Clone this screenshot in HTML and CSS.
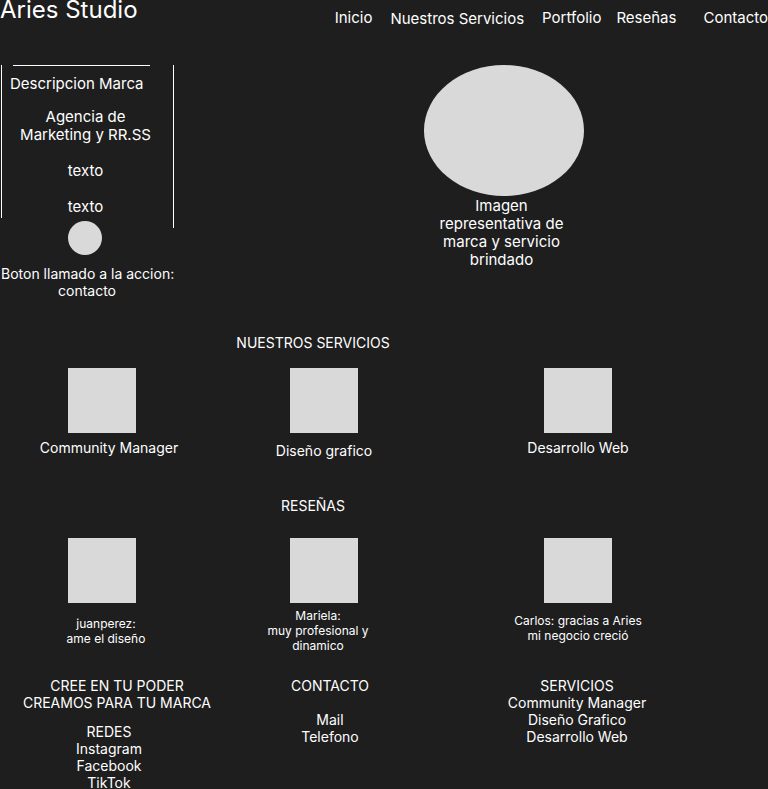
FILE: index.html
```html
<!DOCTYPE html>
<html lang="es">
<head>
<meta charset="utf-8">
<title>Aries Studio</title>
<link rel="stylesheet" href="styles.css">
</head>
<body>
<header class="site-header">
  <div class="logo">Aries Studio</div>
  <nav class="nav">
    <a class="nav-link">Inicio</a>
    <a class="nav-link nav-link--low">Nuestros Servicios</a>
    <a class="nav-link">Portfolio</a>
    <a class="nav-link nav-link--tight">Reseñas</a>
    <a class="nav-link nav-link--wide">Contacto</a>
  </nav>
</header>

<section class="hero">
  <div class="hero-left">
    <div class="brand-box">
      <div class="brand-rule"></div>
      <div class="brand-title">Descripcion Marca</div>
      <div class="brand-text brand-text--first">Agencia de<br>Marketing y RR.SS</div>
      <div class="brand-text">texto</div>
      <div class="brand-text">texto</div>
    </div>
    <div class="cta-dot"></div>
    <div class="cta-label">Boton llamado a la accion:<br>contacto</div>
  </div>
  <div class="hero-rule"></div>
  <figure class="hero-figure">
    <div class="hero-ellipse"></div>
    <figcaption class="hero-caption">Imagen<br>representativa de<br>marca y servicio<br>brindado</figcaption>
  </figure>
</section>

<section class="services">
  <h2 class="section-title">NUESTROS SERVICIOS</h2>
  <div class="cards">
    <div class="card">
      <div class="thumb"></div>
      <div class="card-label card-label--shift">Community Manager</div>
    </div>
    <div class="card">
      <div class="thumb"></div>
      <div class="card-label card-label--low">Diseño grafico</div>
    </div>
    <div class="card">
      <div class="thumb"></div>
      <div class="card-label">Desarrollo Web</div>
    </div>
  </div>
</section>

<section class="reviews">
  <h2 class="section-title section-title--reviews">RESEÑAS</h2>
  <div class="cards cards--reviews">
    <div class="card">
      <div class="thumb"></div>
      <div class="review-area"><p class="review review--right">juanperez:<br>ame el diseño</p></div>
    </div>
    <div class="card">
      <div class="thumb"></div>
      <div class="review-area"><p class="review review--left">Mariela:<br>muy profesional y<br>dinamico</p></div>
    </div>
    <div class="card">
      <div class="thumb"></div>
      <div class="review-area"><p class="review review--up">Carlos: gracias a Aries<br>mi negocio creció</p></div>
    </div>
  </div>
</section>

<footer class="footer">
  <div class="footer-col">
    <p class="footer-slogan">CREE EN TU PODER<br>CREAMOS PARA TU MARCA</p>
    <p class="footer-block">REDES<br>Instagram<br>Facebook<br>TikTok</p>
  </div>
  <div class="footer-col">
    <p class="footer-head">CONTACTO</p>
    <p class="footer-list footer-list--gap">Mail<br>Telefono</p>
  </div>
  <div class="footer-col">
    <p class="footer-head">SERVICIOS</p>
    <p class="footer-list">Community Manager<br>Diseño Grafico<br>Desarrollo Web</p>
  </div>
</footer>
</body>
</html>
```

FILE: styles.css
```css
* { box-sizing: border-box; }

html, body {
  margin: 0;
  padding: 0;
  background: #1e1e1e;
}

body {
  width: 768px;
  color: #ffffff;
  font-family: Inter, "Noto Sans", sans-serif;
  overflow-x: hidden;
}

p, h2, figure { margin: 0; }

/* Header */
.site-header {
  display: flex;
  align-items: flex-start;
  height: 65px;
}

.logo {
  font-size: 24px;
  line-height: 29px;
  margin-top: -5px;
  white-space: nowrap;
}

.nav {
  display: flex;
  align-items: flex-start;
  margin-left: auto;
  padding-top: 9px;
  font-size: 15px;
  line-height: 18px;
  white-space: nowrap;
}

.nav-link { color: #ffffff; margin-left: 18px; }
.nav-link:first-child { margin-left: 0; }
.nav-link--low { margin-top: 1px; margin-left: 18px; }
.nav-link--tight { margin-left: 15px; }
.nav-link--wide { margin-left: 27px; }

/* Hero */
.hero {
  display: flex;
  align-items: flex-start;
}

.hero-left {
  width: 173px;
  display: flex;
  flex-direction: column;
}

.brand-box {
  margin-left: 1px;
  height: 153px;
  border-left: 1px solid #ffffff;
  padding-right: 4px;
  font-size: 15px;
  line-height: 18px;
  text-align: center;
}

.brand-rule {
  width: 137px;
  height: 1px;
  margin-left: 11px;
  background: #ffffff;
}

.brand-title {
  margin-top: 9px;
  padding-left: 8px;
  text-align: left;
  white-space: nowrap;
}

.brand-text { margin-top: 18px; white-space: nowrap; }
.brand-text--first { margin-top: 15px; }

.cta-dot {
  width: 34px;
  height: 34px;
  margin: 3px 0 0 68px;
  border-radius: 50%;
  background: #d9d9d9;
}

.cta-label {
  margin-top: 10px;
  padding-left: 1px;
  font-size: 14px;
  line-height: 17px;
  text-align: center;
  white-space: nowrap;
}

.hero-rule {
  width: 1px;
  height: 163px;
  background: #ffffff;
}

.hero-figure {
  margin-left: 250px;
  width: 160px;
  display: flex;
  flex-direction: column;
  align-items: center;
}

.hero-ellipse {
  width: 160px;
  height: 131px;
  border-radius: 50%;
  background: #d9d9d9;
}

.hero-caption {
  margin-top: 1px;
  margin-right: 5px;
  font-size: 15px;
  line-height: 18px;
  text-align: center;
  white-space: nowrap;
}

/* Sections */
.section-title {
  width: 626px;
  font-size: 14px;
  font-weight: 400;
  line-height: 17px;
  text-align: center;
}

.services { margin-top: 35px; }
.reviews { margin-top: 38px; }

.cards {
  display: grid;
  grid-template-columns: 204px 240px 268px;
  align-items: start;
  margin-top: 17px;
}

.cards--reviews { margin-top: 24px; }

.card {
  display: flex;
  flex-direction: column;
  align-items: center;
}

.thumb {
  width: 68px;
  height: 65px;
  background: #d9d9d9;
}

.card-label {
  margin-top: 6px;
  font-size: 14px;
  line-height: 17px;
  white-space: nowrap;
}

.card-label--shift { padding-left: 14px; }
.card-label--low { margin-top: 9px; }

.review-area {
  height: 49px;
  display: flex;
  align-items: center;
  justify-content: center;
  margin-top: 3px;
}

.review {
  font-size: 12px;
  line-height: 15px;
  text-align: center;
  white-space: nowrap;
}

.review--right { padding-left: 8px; }
.review--left { padding-right: 12px; }
.review--up { margin-bottom: 5px; }

/* Footer */
.footer {
  display: grid;
  grid-template-columns: 218px 224px 270px;
  align-items: start;
  margin-top: 22px;
  font-size: 14px;
  line-height: 17px;
  text-align: center;
}

.footer-col { white-space: nowrap; }

.footer-slogan { padding-left: 16px; }
.footer-block { margin-top: 12px; }
.footer-list--gap { margin-top: 17px; }
```
